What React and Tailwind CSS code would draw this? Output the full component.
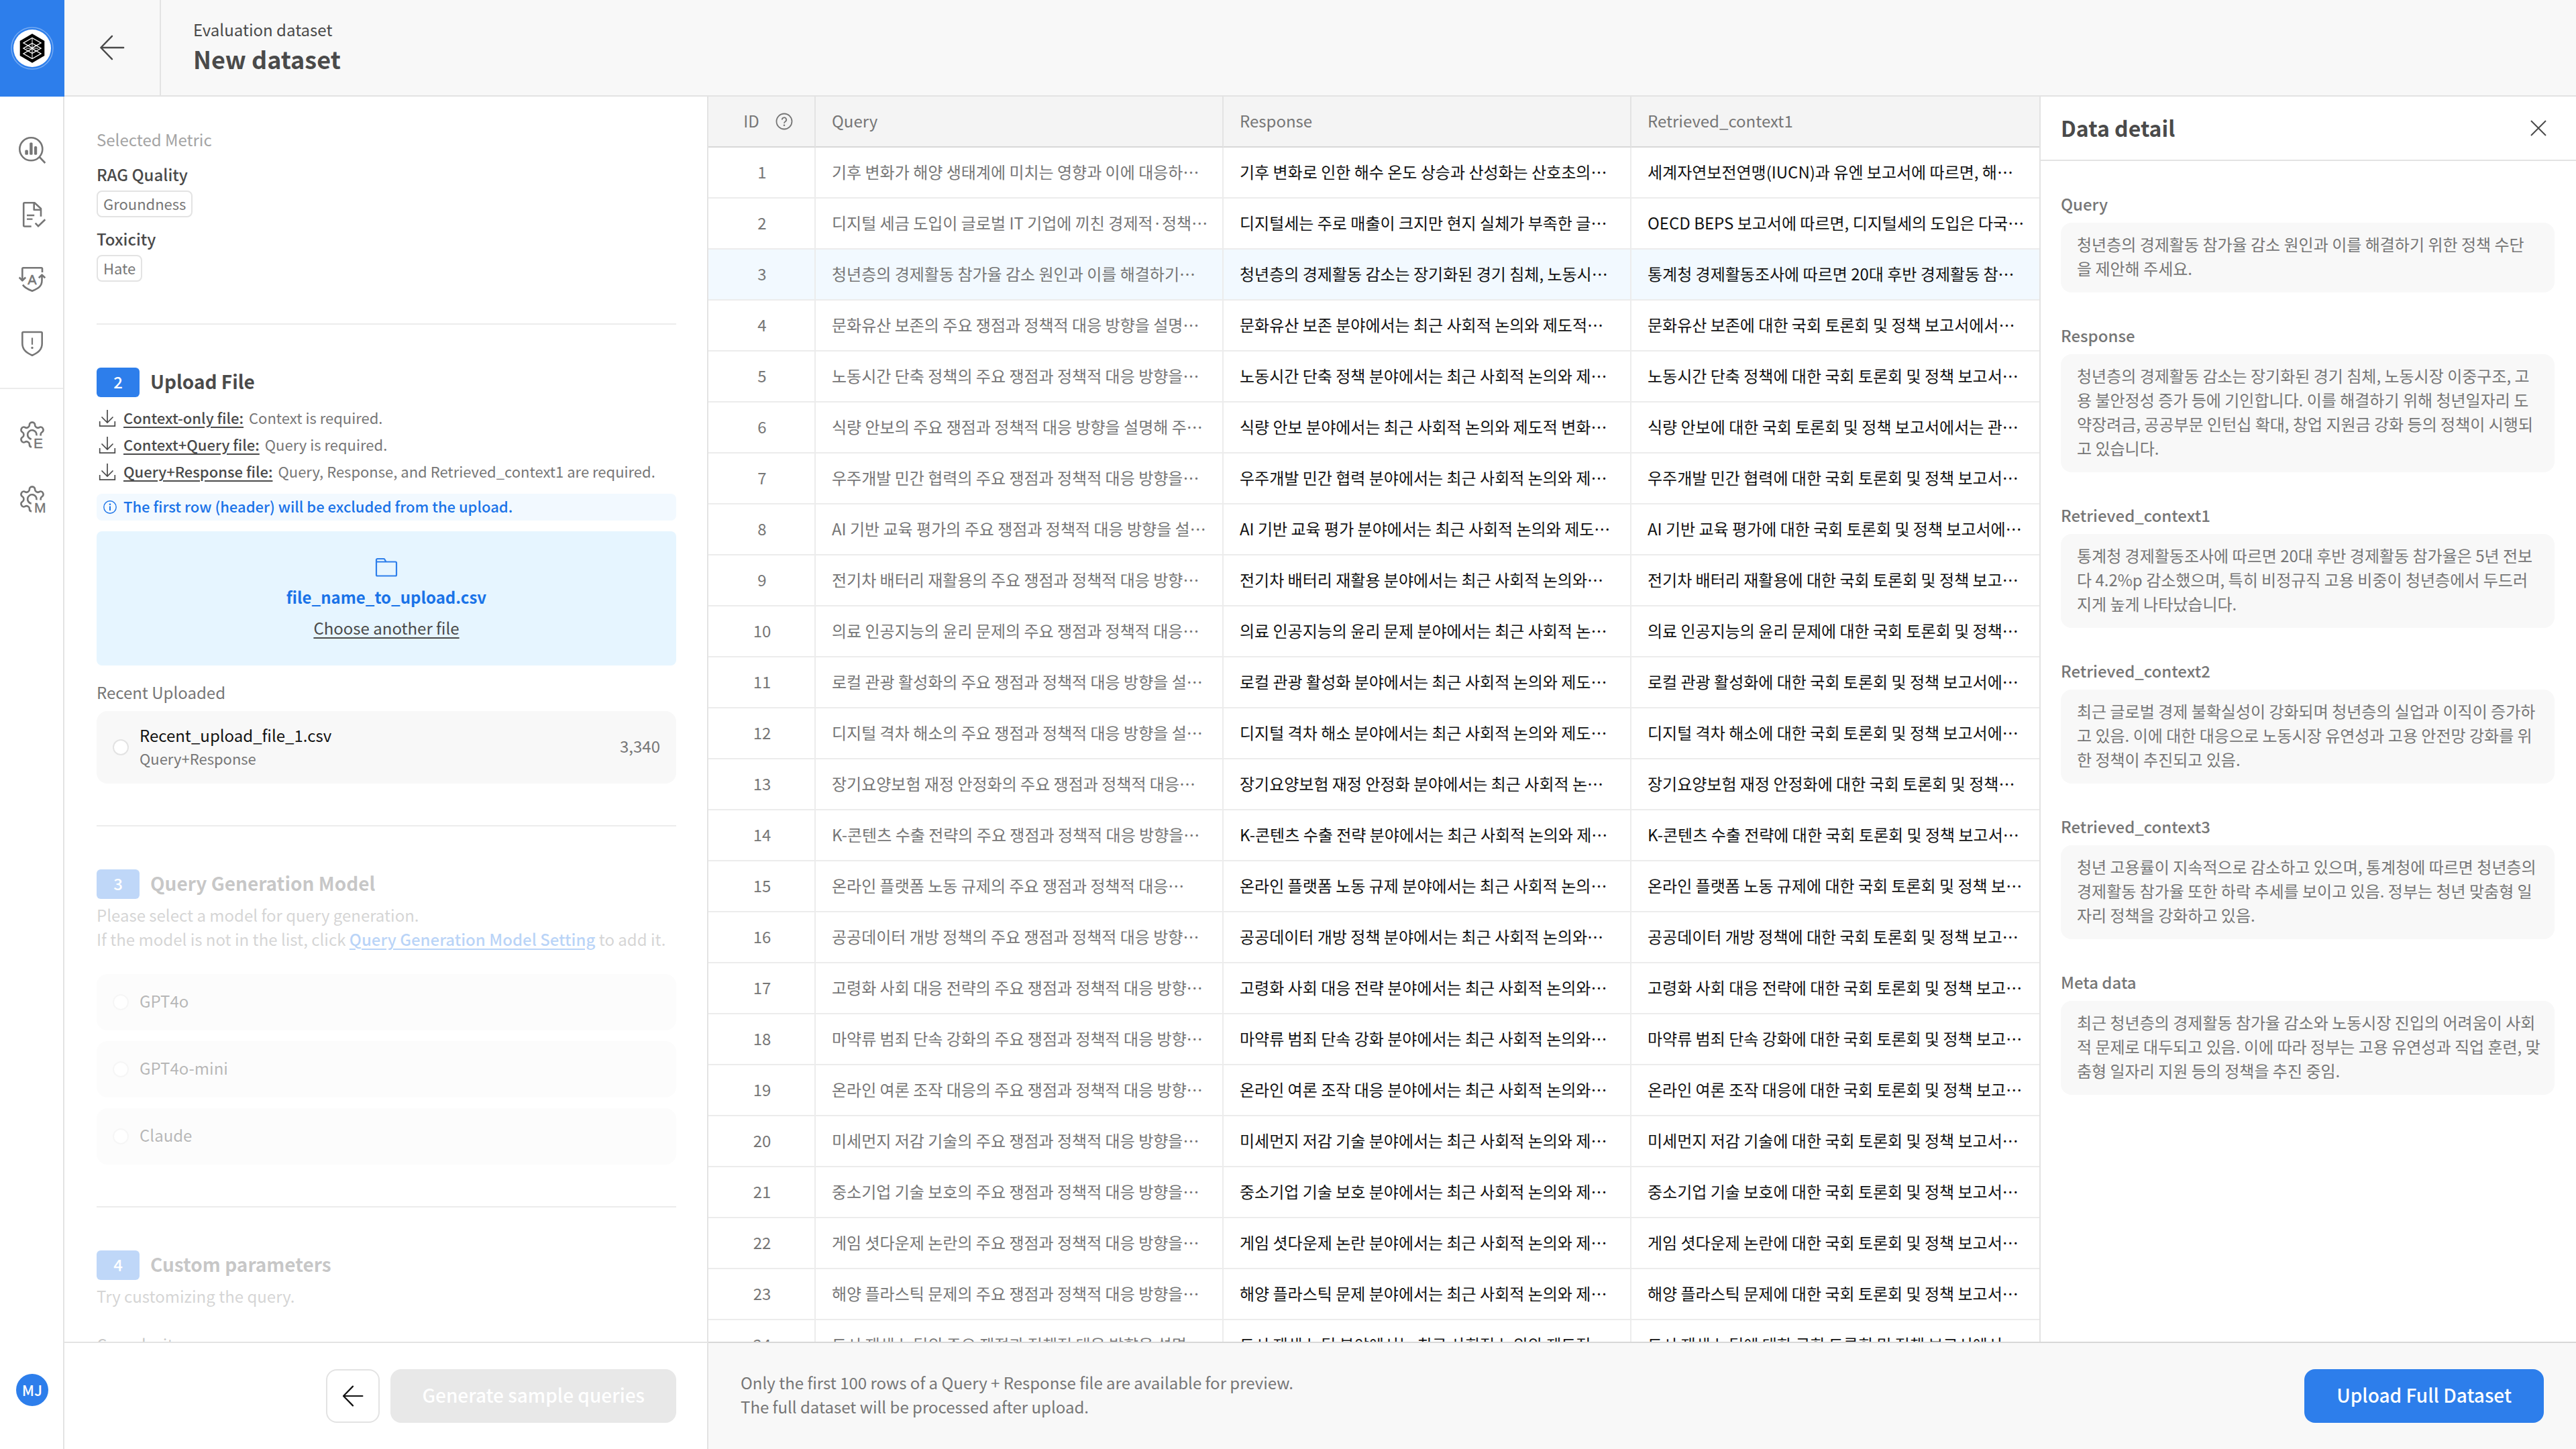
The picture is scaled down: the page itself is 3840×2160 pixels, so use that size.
import React from "react";

const opening = [
  [
    "기후 변화가 해양 생태계에 미치는 영향과 이에 대응하…",
    "기후 변화로 인한 해수 온도 상승과 산성화는 산호초의…",
    "세계자연보전연맹(IUCN)과 유엔 보고서에 따르면, 해…",
  ],
  [
    "디지털 세금 도입이 글로벌 IT 기업에 끼친 경제적·정책…",
    "디지털세는 주로 매출이 크지만 현지 실체가 부족한 글…",
    "OECD BEPS 보고서에 따르면, 디지털세의 도입은 다국…",
  ],
  [
    "청년층의 경제활동 참가율 감소 원인과 이를 해결하기…",
    "청년층의 경제활동 감소는 장기화된 경기 침체, 노동시…",
    "통계청 경제활동조사에 따르면 20대 후반 경제활동 참…",
  ],
];

// Topic, then the tail at which each of the three preview cells is cut.
const topics = [
  ["문화유산 보존", "대응 방향을 설명", "논의와 제도적", "보고서에서"],
  ["노동시간 단축 정책", "대응 방향을", "논의와 제", "보고서"],
  ["식량 안보", "대응 방향을 설명해 주", "논의와 제도적 변화", "보고서에서는 관"],
  ["우주개발 민간 협력", "대응 방향을", "논의와 제", "보고서"],
  ["AI 기반 교육 평가", "대응 방향을 설", "논의와 제도", "보고서에"],
  ["전기차 배터리 재활용", "대응 방향", "논의와", "보고"],
  ["의료 인공지능의 윤리 문제", "대응", "논", ""],
  ["로컬 관광 활성화", "대응 방향을 설", "논의와 제도", "보고서에"],
  ["디지털 격차 해소", "대응 방향을 설", "논의와 제도", "보고서에"],
  ["장기요양보험 재정 안정화", "대응", "논", ""],
  ["K-콘텐츠 수출 전략", "대응 방향을", "논의와 제", "보고서"],
  ["온라인 플랫폼 노동 규제", "대응", "논의", "보"],
  ["공공데이터 개방 정책", "대응 방향", "논의와", "보고"],
  ["고령화 사회 대응 전략", "대응 방향", "논의와", "보고"],
  ["마약류 범죄 단속 강화", "대응 방향", "논의와", "보고"],
  ["온라인 여론 조작 대응", "대응 방향", "논의와", "보고"],
  ["미세먼지 저감 기술", "대응 방향을", "논의와 제", "보고서"],
  ["중소기업 기술 보호", "대응 방향을", "논의와 제", "보고서"],
  ["게임 셧다운제 논란", "대응 방향을", "논의와 제", "보고서"],
  ["해양 플라스틱 문제", "대응 방향을", "논의와 제", "보고서"],
  ["도시 재생 뉴딜", "대응 방향을 설명", "논의와 제도적", "보고서에서"],
];

const rows = [
  ...opening,
  ...topics.map(([t, q, r, c]) => [
    `${t}의 주요 쟁점과 정책적 ${q}…`,
    `${t} 분야에서는 최근 사회적 ${r}…`,
    `${t}에 대한 국회 토론회 및 정책 ${c}`.trimEnd() + "…",
  ]),
];

const details = [
  ["Query", "청년층의 경제활동 참가율 감소 원인과 이를 해결하기 위한 정책 수단\n을 제안해 주세요."],
  [
    "Response",
    "청년층의 경제활동 감소는 장기화된 경기 침체, 노동시장 이중구조, 고\n용 불안정성 증가 등에 기인합니다. 이를 해결하기 위해 청년일자리 도\n약장려금, 공공부문 인턴십 확대, 창업 지원금 강화 등의 정책이 시행되\n고 있습니다.",
  ],
  [
    "Retrieved_context1",
    "통계청 경제활동조사에 따르면 20대 후반 경제활동 참가율은 5년 전보\n다 4.2%p 감소했으며, 특히 비정규직 고용 비중이 청년층에서 두드러\n지게 높게 나타났습니다.",
  ],
  [
    "Retrieved_context2",
    "최근 글로벌 경제 불확실성이 강화되며 청년층의 실업과 이직이 증가하\n고 있음. 이에 대한 대응으로 노동시장 유연성과 고용 안전망 강화를 위\n한 정책이 추진되고 있음.",
  ],
  [
    "Retrieved_context3",
    "청년 고용률이 지속적으로 감소하고 있으며, 통계청에 따르면 청년층의\n경제활동 참가율 또한 하락 추세를 보이고 있음. 정부는 청년 맞춤형 일\n자리 정책을 강화하고 있음.",
  ],
  [
    "Meta data",
    "최근 청년층의 경제활동 참가율 감소와 노동시장 진입의 어려움이 사회\n적 문제로 대두되고 있음. 이에 따라 정부는 고용 유연성과 직업 훈련, 맞\n춤형 일자리 지원 등의 정책을 추진 중임.",
  ],
];

const downloads = [
  ["Context-only file:", "Context is required."],
  ["Context+Query file:", "Query is required."],
  ["Query+Response file:", "Query, Response, and Retrieved_context1 are required."],
];

const models = ["GPT4o", "GPT4o-mini", "Claude"];

function Logo() {
  return (
    <svg className="size-16" viewBox="0 0 64 64" fill="none">
      <circle cx="32" cy="32" r="31" stroke="#fff" strokeOpacity="0.35" strokeWidth="1.5" />
      <circle cx="32" cy="32" r="28" fill="#fff" />
      <path d="M32 10.3 50.3 21v22L32 53.7 13.7 43V21z" fill="#000" />
      <g stroke="#fff" strokeWidth="1.4">
        <path d="M32 16.5 45 24 32 31.5 19 24z" />
        <path d="M32 24.5 45 32 32 39.5 19 32z" />
        <path d="M32 32.5 45 40 32 47.5 19 40z" />
        <path d="M32 16v32M23 32h18M26 27.5l12 9M38 27.5l-12 9" strokeWidth="1" />
      </g>
    </svg>
  );
}

function NavIcon({ children }) {
  return (
    <svg
      className="size-12"
      viewBox="0 0 48 48"
      fill="none"
      stroke="#767676"
      strokeWidth="2.6"
      strokeLinejoin="round"
    >
      {children}
    </svg>
  );
}

function Gear({ letter, x }) {
  return (
    <NavIcon>
      <g transform="translate(24 24) scale(1.84) translate(-12 -12)" strokeWidth="1.45">
        <path d="M12.22 2h-.44a2 2 0 0 0-2 2v.18a2 2 0 0 1-1 1.73l-.43.25a2 2 0 0 1-2 0l-.15-.08a2 2 0 0 0-2.73.73l-.22.38a2 2 0 0 0 .73 2.73l.15.1a2 2 0 0 1 1 1.72v.51a2 2 0 0 1-1 1.74l-.15.09a2 2 0 0 0-.73 2.73l.22.38a2 2 0 0 0 2.73.73l.15-.08a2 2 0 0 1 2 0l.43.25a2 2 0 0 1 1 1.73V20a2 2 0 0 0 1.7 2" />
        <path d="M11.78 2h.44a2 2 0 0 1 2 2v.18a2 2 0 0 0 1 1.73l.43.25a2 2 0 0 0 2 0l.15-.08a2 2 0 0 1 2.73.73l.22.38a2 2 0 0 1-.73 2.73l-.15.1a2 2 0 0 0-1 1.72v1.1" />
        <path d="M15.5 12.7A3.65 3.65 0 1 0 11.3 15.6" />
      </g>
      <text
        x={x}
        y="43.5"
        fill="#767676"
        stroke="#767676"
        strokeWidth="0.4"
        fontFamily="Liberation Sans, sans-serif"
        fontSize="21"
      >
        {letter}
      </text>
    </NavIcon>
  );
}

function NavButton({ label, children }) {
  return (
    <button type="button" aria-label={label} className="size-12">
      {children}
    </button>
  );
}

function Sidebar() {
  return (
    <aside className="flex w-24 shrink-0 flex-col">
      <div className="flex h-36 shrink-0 items-center justify-center bg-[#2d7eeb]">
        <Logo />
      </div>
      <nav className="flex flex-1 flex-col border-r-2 border-[#e3e3e3]">
        <div className="flex flex-col items-center gap-12 border-b-2 border-[#ececec] pt-14 pb-[42px] pl-0.5">
          <NavButton label="Evaluation">
            <NavIcon>
              <circle cx="22.3" cy="22.3" r="17" />
              <path d="m34.8 34 8.5 9" />
              <g fill="#767676" stroke="none">
                <rect x="13.3" y="23.5" width="4.6" height="7.3" rx="1.5" />
                <rect x="20.2" y="12.5" width="4.4" height="18.3" rx="1.5" />
                <rect x="27" y="18" width="4.2" height="12.8" rx="1.5" />
              </g>
            </NavIcon>
          </NavButton>
          <NavButton label="Datasets">
            <NavIcon>
              <path d="M22.7 41.5H12.7a1.5 1.5 0 0 1-1.5-1.5V7.7a1.5 1.5 0 0 1 1.5-1.5H27.5L37 15v11.7" />
              <path d="M26.7 6.2v10.5H37" />
              <path d="M16 25h11.2M16 30.7h8.5" strokeWidth="2.3" />
              <path d="m28.7 36.7 4.3 4.5 10.3-10" strokeLinejoin="miter" />
            </NavIcon>
          </NavButton>
          <NavButton label="Auto safety">
            <NavIcon>
              <path d="M39 14V8.5a1.2 1.2 0 0 0-1.2-1.2H10.5a1.2 1.2 0 0 0-1.2 1.2v17.5M4.7 21.5l4.6 4.8 4.9-4.8" />
              <path d="M10 32.5c2 3.5 5.5 6 14 9.3C34 37.5 38.5 34 38.5 26V18.5M33.8 22.3l4.7-4.6 4.8 4.6" />
              <text
                x="24"
                y="31.5"
                textAnchor="middle"
                fill="#767676"
                stroke="#767676"
                strokeWidth="0.6"
                fontFamily="Liberation Sans, sans-serif"
                fontSize="20"
              >
                A
              </text>
            </NavIcon>
          </NavButton>
          <NavButton label="Risk">
            <NavIcon>
              <path d="M10.8 7h26.4a1.5 1.5 0 0 1 1.5 1.5V24c0 9-5.5 13.5-14.7 17.8C14.8 37.5 9.3 33 9.3 24V8.5A1.5 1.5 0 0 1 10.8 7z" />
              <path d="M24 15.5v10.3" strokeWidth="2.2" />
              <circle cx="24" cy="30.5" r="1.7" fill="#767676" stroke="none" />
            </NavIcon>
          </NavButton>
        </div>
        <div className="flex flex-col items-center gap-12 pt-11 pl-0.5">
          <NavButton label="Evaluation settings">
            <Gear letter="E" x="26" />
          </NavButton>
          <NavButton label="Model settings">
            <Gear letter="M" x="27" />
          </NavButton>
        </div>
        <button
          type="button"
          className="mt-auto mb-16 ml-6 size-12 rounded-full bg-[#2d7eeb] pb-0.5 text-[22px] leading-none font-medium text-white"
        >
          MJ
        </button>
      </nav>
    </aside>
  );
}

function Arrow({ className, width }) {
  return (
    <svg className={className} viewBox="0 0 40 40" fill="none" stroke="currentColor" strokeWidth={width}>
      <path d="M38 20H3M20 2 2.5 20 20 38" strokeLinejoin="round" strokeLinecap="round" />
    </svg>
  );
}

function StepTitle({ step, children }) {
  return (
    <h2 className="flex h-11 items-center gap-4 text-[28px] font-bold">
      <span className="h-11 w-16 shrink-0 rounded-md bg-[#2d7eeb] text-center text-2xl leading-[42px] font-medium text-white">
        {step}
      </span>
      <span className="pb-1 leading-10">{children}</span>
    </h2>
  );
}

function Metric({ name, tag }) {
  return (
    <div className="mt-3.5 flex flex-col items-start gap-1.5">
      <p className="text-2xl leading-9 font-medium">{name}</p>
      <span className="h-10 rounded-lg border-2 border-[#e3e3e3] px-2 text-[22px] leading-[34px] text-[#767676]">
        {tag}
      </span>
    </div>
  );
}

const radioClass =
  "size-6 shrink-0 appearance-none rounded-full border-2 border-[#e3e3e3] bg-white";

function SetupPanel() {
  return (
    <section className="flex w-[960px] shrink-0 flex-col border-r-2 border-[#e3e3e3]">
      <div className="min-h-0 flex-1 overflow-hidden pr-[46px] pl-12">
        <div className="border-b-2 border-[#ececec] pt-[46px] pb-[62px]">
          <p className="mb-4 text-2xl leading-9 text-[#a4a4a4]">Selected Metric</p>
          <Metric name="RAG Quality" tag="Groundness" />
          <Metric name="Toxicity" tag="Hate" />
        </div>

        <div className="border-b-2 border-[#ececec] pt-16 pb-[62px]">
          <StepTitle step="2">Upload File</StepTitle>
          <ul className="mt-4 flex flex-col gap-2 text-[22px] leading-7">
            {downloads.map(([name, text]) => (
              <li key={name} className="flex h-8 items-center gap-2 whitespace-nowrap">
                <svg className="size-8 shrink-0" viewBox="0 0 32 32" fill="none" stroke="currentColor" strokeWidth="1.7">
                  <path d="M16 3v19M7.5 13.5 16 22l8.5-8.5M4.7 20v7.2h22.6V20" />
                </svg>
                <a href="#download" className="pb-1 font-medium underline underline-offset-4">
                  {name}
                </a>
                <span className="pb-1 text-[#767676]">{text}</span>
              </li>
            ))}
          </ul>
          <p className="mt-4 flex h-10 items-center gap-2 rounded-lg bg-[#f2f9ff] px-2 text-[22px] leading-8 font-medium text-[#1a73e8]">
            <svg className="size-6" viewBox="0 0 24 24" fill="none" stroke="currentColor" strokeWidth="1.4">
              <circle cx="12" cy="12" r="9.2" />
              <path d="M12 10.5V17" strokeWidth="2" />
              <circle cx="12" cy="7.7" r="1.3" fill="currentColor" stroke="none" />
            </svg>
            <span className="pb-1">The first row (header) will be excluded from the upload.</span>
          </p>
          <div className="mt-4 flex h-[200px] flex-col items-center rounded-lg bg-[#e6f5ff] pt-9">
            <svg className="h-9 w-9" viewBox="0 0 36 36" fill="none" stroke="#2d7eeb" strokeWidth="2.2" strokeLinejoin="round">
              <path d="M3 29V6.5A1.5 1.5 0 0 1 4.5 5h9.5a1.5 1.5 0 0 1 1.3.7L17.5 9.5H31.5A1.5 1.5 0 0 1 33 11v18a1.5 1.5 0 0 1-1.5 1.5h-27A1.5 1.5 0 0 1 3 29zM3 9.5h14.5" />
            </svg>
            <p className="mt-1.5 text-2xl leading-10 font-bold text-[#1a73e8]">file_name_to_upload.csv</p>
            <button type="button" className="mt-2 text-2xl leading-9 underline underline-offset-4">
              Choose another file
            </button>
          </div>
          <p className="mt-[22px] text-2xl leading-9 text-[#767676]">Recent Uploaded</p>
          <label className="mt-2.5 flex h-[108px] items-center gap-4 rounded-2xl bg-[#f8f8f8] px-6">
            <input type="radio" name="recent" className={radioClass} />
            <span className="flex flex-1 flex-col pb-1">
              <span className="text-2xl leading-9 text-[#111]">Recent_upload_file_1.csv</span>
              <span className="text-[22px] leading-8 text-[#767676]">Query+Response</span>
            </span>
            <span className="pb-1 text-2xl text-[#767676]">3,340</span>
          </label>
        </div>

        <div className="border-b-2 border-[#ececec] pt-16 pb-[62px]">
          <div className="opacity-30">
            <StepTitle step="3">Query Generation Model</StepTitle>
            <p className="mt-1.5 text-2xl leading-9 text-[#767676]">
              Please select a model for query generation.
              <br />
              If the model is not in the list, click{" "}
              <a href="#models" className="font-medium text-[#1a73e8] underline underline-offset-4">
                Query Generation Model Setting
              </a>{" "}
              to add it.
            </p>
            <div className="mt-[34px] flex flex-col gap-4">
              {models.map((m) => (
                <label key={m} className="flex h-[84px] items-center gap-4 rounded-2xl bg-[#f8f8f8] px-6 text-2xl text-[#111]">
                  <input type="radio" name="model" disabled className={radioClass} />
                  <span className="pb-1">{m}</span>
                </label>
              ))}
            </div>
          </div>
        </div>

        <div className="pt-16 opacity-30">
          <StepTitle step="4">Custom parameters</StepTitle>
          <p className="mt-1.5 text-2xl leading-9 text-[#767676]">Try customizing the query.</p>
          <p className="mt-9 text-2xl leading-9">Complexity</p>
        </div>
      </div>

      <div className="flex h-40 shrink-0 items-center justify-end gap-4 border-t-2 border-[#e3e3e3] pr-[46px]">
        <button
          type="button"
          aria-label="Back"
          className="flex size-20 items-center justify-center rounded-2xl border-2 border-[#e3e3e3] text-[#111]"
        >
          <Arrow className="size-8" width="2.8" />
        </button>
        <button
          type="button"
          disabled
          className="h-20 rounded-2xl bg-[#e8e8e8] px-[47px] pb-1 text-[28px] font-medium text-white"
        >
          Generate sample queries
        </button>
      </div>
    </section>
  );
}

function DataTable() {
  const th = "border-r-2 border-b-2 border-r-[#e3e3e3] border-b-[#d8d8d8] pr-3 pb-0.5 pl-6 text-left font-normal last:border-r-0";
  const td = "overflow-hidden border-r-2 border-b-2 border-[#ececec] pr-3 pb-0.5 pl-6 whitespace-nowrap last:border-r-0";
  return (
    <div className="min-w-0 flex-1 overflow-hidden">
      <table className="w-full table-fixed border-separate border-spacing-0 text-2xl">
        <thead>
          <tr className="h-[76px] bg-[#f4f4f4] text-[#767676]">
            <th className="w-40 border-r-2 border-b-2 border-r-[#e3e3e3] border-b-[#d8d8d8] font-normal">
              <span className="flex items-center justify-center gap-6 pl-5">
                <span className="pb-0.5">ID</span>
                <svg className="size-[26px]" viewBox="0 0 26 26" fill="none" stroke="currentColor" strokeWidth="1.8">
                  <circle cx="13" cy="13" r="11.5" />
                  <path d="M9.8 10.5a3.2 3.2 0 1 1 4.8 2.7c-1.1.7-1.6 1.2-1.6 2.6" />
                  <circle cx="13" cy="18.7" r="1.3" fill="currentColor" stroke="none" />
                </svg>
              </span>
            </th>
            <th className={th}>Query</th>
            <th className={th}>Response</th>
            <th className={th}>Retrieved_context1</th>
          </tr>
        </thead>
        <tbody>
          {rows.map(([query, response, context], i) => (
            <tr key={i} className={i === 2 ? "h-[76px] bg-[#f2f9ff] text-[#111]" : "h-[76px] text-[#111]"}>
              <td className="border-r-2 border-b-2 border-[#ececec] pb-0.5 pl-0.5 text-center text-[#767676]">{i + 1}</td>
              <td className={td + " text-[#767676]"}>{query}</td>
              <td className={td}>{response}</td>
              <td className={td}>{context}</td>
            </tr>
          ))}
        </tbody>
      </table>
    </div>
  );
}

function DetailPanel() {
  return (
    <aside className="w-[800px] shrink-0 overflow-hidden border-l-2 border-[#e3e3e3]">
      <header className="flex h-24 items-center justify-between border-b-2 border-[#e3e3e3] pr-10 pl-[30px]">
        <h2 className="pb-0.5 text-[32px] font-bold">Data detail</h2>
        <button type="button" aria-label="Close" className="size-8">
          <svg className="size-8" viewBox="0 0 32 32" fill="none" stroke="currentColor" strokeWidth="2">
            <path d="m5 5 22 22M27 5 5 27" />
          </svg>
        </button>
      </header>
      <dl className="flex flex-col gap-[46px] pt-[46px] pr-8 pl-[30px] text-2xl leading-9 text-[#767676]">
        {details.map(([name, text]) => (
          <div key={name} className="flex flex-col gap-2.5">
            <dt className="font-medium">{name}</dt>
            <dd className="rounded-2xl bg-[#f8f8f8] pt-3.5 pr-4 pb-[18px] pl-6 break-all whitespace-pre-line">
              {text}
            </dd>
          </div>
        ))}
      </dl>
    </aside>
  );
}

export default function App() {
  return (
    <div className="flex h-screen bg-white font-['Noto_Sans_CJK_KR',sans-serif] text-[#4a4a4a]">
      <Sidebar />
      <div className="flex min-w-0 flex-1 flex-col">
        <header className="flex h-36 shrink-0 border-b-2 border-[#e3e3e3] bg-[#f8f8f8]">
          <button
            type="button"
            aria-label="Back"
            className="flex w-36 items-center justify-center border-r-2 border-[#e3e3e3]"
          >
            <Arrow className="size-[38px]" width="2.6" />
          </button>
          <div className="flex flex-col justify-center pb-1 pl-12">
            <p className="text-2xl leading-9">Evaluation dataset</p>
            <h1 className="text-4xl leading-[50px] font-bold">New dataset</h1>
          </div>
        </header>
        <div className="flex min-h-0 flex-1">
          <SetupPanel />
          <main className="flex min-w-0 flex-1 flex-col">
            <div className="flex min-h-0 flex-1">
              <DataTable />
              <DetailPanel />
            </div>
            <footer className="flex h-40 shrink-0 items-center justify-between border-t-2 border-[#d8d8d8] bg-[#f8f8f8] px-12">
              <p className="pb-1 text-2xl leading-9 text-[#767676]">
                Only the first 100 rows of a Query + Response file are available for preview.
                <br />
                The full dataset will be processed after upload.
              </p>
              <button
                type="button"
                className="h-20 rounded-2xl bg-[#2d7eeb] px-12 pb-1 text-[28px] font-medium text-white"
              >
                Upload Full Dataset
              </button>
            </footer>
          </main>
        </div>
      </div>
    </div>
  );
}
